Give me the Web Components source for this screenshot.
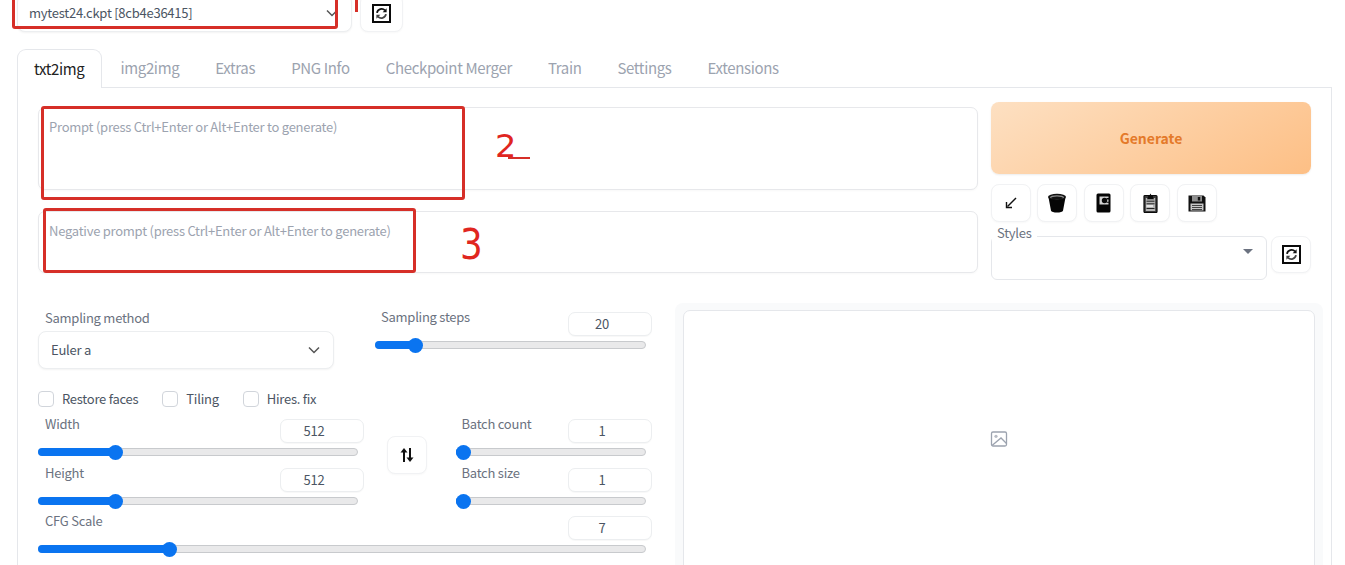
<!DOCTYPE html>
<html><head><meta charset="utf-8">
<style>
html,body{margin:0;padding:0;background:#fff;overflow:hidden;height:565px}
body{font-family:"Noto Sans CJK SC","Liberation Sans",sans-serif;font-size:13px;letter-spacing:-.25px;color:#4b5563}
</style></head><body>
<sd-app></sd-app>
<script>
const def=(name,css,html)=>{
  customElements.define(name,class extends HTMLElement{
    constructor(){super();this.attachShadow({mode:'open'});
      const f=typeof html==='function'?html(this):html;
      this.shadowRoot.innerHTML='<style>'+css+'</style>'+f;}
  });
};
const ICONS={
refresh:'<svg width="19" height="19" viewBox="0 0 19 19"><rect x="1" y="1" width="17" height="17" fill="#fff" stroke="#0a0a0a" stroke-width="2"/><path d="M5 8.800A4.700 4.700 0 0 1 13 6.400" fill="none" stroke="#111" stroke-width="1.800"/><path d="M14.600 4.300v4h-4z" fill="#111"/><path d="M14 10.200A4.700 4.700 0 0 1 6 12.600" fill="none" stroke="#444" stroke-width="1.800"/><path d="M4.400 14.700v-4h4z" fill="#444"/></svg>',
arrow:'<svg width="12" height="12" viewBox="0 0 12 12"><path d="M11 1 2.500 9.500" stroke="#111" stroke-width="1.400"/><path d="M1.500 5v5.500H7" fill="none" stroke="#111" stroke-width="1.400"/></svg>',
bin:'<svg width="20" height="20" viewBox="0 0 20 20"><path d="M1.500 4.500 4 17.500c.3 1.500 3 2 6 2s5.700-.5 6-2L18.500 4.500z" fill="#050505"/><ellipse cx="10" cy="4" rx="9" ry="3.200" fill="#111"/><ellipse cx="10" cy="4.200" rx="7" ry="2" fill="#8d8d8d"/><ellipse cx="10" cy="5" rx="6" ry="1.500" fill="#111"/></svg>',
card:'<svg width="15" height="20" viewBox="0 0 15 20"><rect x=".5" y=".5" width="14" height="19" rx="1.500" fill="#050505"/><rect x="3.500" y="3.500" width="9" height="8" fill="#d2d2d2"/><circle cx="8.500" cy="7.500" r="2.700" fill="#0a0a0a"/><path d="M10.500 5h2.500v1.500h-2.500zM10.500 8.800h2.500v1h-2.500z" fill="#050505"/></svg>',
clip:'<svg width="15" height="20" viewBox="0 0 15 20"><rect x="1" y="2.500" width="13" height="17" rx="1" fill="#3a3a3a" stroke="#0a0a0a" stroke-width="1.200"/><rect x="2.800" y="5" width="9.400" height="13" fill="#b4b4b4"/><path d="M4.500 5 5.500 2.500h1L7.500.6 8.500 2.500h1l1 2.500 .5 1.200H4z" fill="#0a0a0a"/><path d="M3.500 8.200h8M3.500 10.800h8M3.500 15.500h8" stroke="#222" stroke-width="1"/><path d="M3.500 13h6.500" stroke="#fff" stroke-width="1.300"/></svg>',
save:'<svg width="18" height="17" viewBox="0 0 18 17"><path d="M.5.5h15l2 2v14H.5z" fill="#111"/><rect x="4" y="1" width="10" height="5.500" fill="#8f8f8f"/><rect x="9.800" y="2" width="2.400" height="3.500" fill="#111"/><rect x="2.500" y="8.500" width="13" height="7" fill="#c8c8c8"/><path d="M4 10.500h10M4 12.500h10M4 14.500h10" stroke="#333" stroke-width=".9"/></svg>',
swap:'<svg width="14" height="16" viewBox="0 0 14 16"><path d="M4 15V3" stroke="#111" stroke-width="2"/><path d="M.5 5.500 4 1l3.500 4.500z" fill="#111"/><path d="M10 1v12" stroke="#111" stroke-width="2"/><path d="M6.500 10.500 10 15l3.500-4.500z" fill="#111"/></svg>'
};
def('sd-icon-btn',`:host{display:flex;align-items:center;justify-content:center;box-sizing:border-box;background:#fff;border:1px solid #f1f2f4;border-radius:8px;box-shadow:0 1px 2px rgba(0,0,0,.03);width:var(--w,40px);height:var(--h,38px);flex:none}
svg{display:block}`,el=>ICONS[el.getAttribute('icon')]);
def('sd-num',`:host{display:flex;align-items:center;justify-content:center;box-sizing:border-box;width:84px;height:24px;padding:0 16px 2px 0;border:1px solid #eceef0;border-radius:7px;background:#fff;color:#4b5563;line-height:1;box-shadow:0 1px 1px rgba(0,0,0,.03)}`,'<slot></slot>');
def('sd-slider',`:host{display:block;box-sizing:border-box;position:relative}
.head{display:flex;justify-content:space-between;align-items:flex-start;height:24px}
.lab{margin-left:var(--lm,7px);line-height:18px;margin-top:-4px;color:#6b7280;white-space:nowrap}
.track{position:relative;height:8px;border:1px solid #c8cacd;border-radius:5px;background:#e9e9ea;margin-top:5px;margin-right:6px;box-sizing:border-box}
.fill{position:absolute;left:-1px;top:-1px;height:8px;background:#0a74f0;border-radius:5px}
.thumb{position:absolute;top:-4.500px;width:15px;height:15px;border-radius:50%;background:#0a74f0;margin-left:-8.500px}`,
el=>{const p=el.getAttribute('pct');return `<div class="head"><div class="lab">${el.getAttribute('label')||''}</div><sd-num>${el.getAttribute('value')}</sd-num></div><div class="track"><div class="fill" style="width:${p}px"></div><div class="thumb" style="left:${p}px"></div></div>`});
def('sd-check',`:host{display:inline-flex;align-items:center;gap:8px;color:#4b5563;white-space:nowrap}
i{display:block;width:16px;height:16px;box-sizing:border-box;border:1px solid #d1d5db;border-radius:4px;background:#fff}
span{display:block;margin-top:-2px}`,'<i></i><span><slot></slot></span>');
def('sd-tabs',`:host{display:flex;align-items:stretch;height:39px;box-sizing:border-box;position:relative;z-index:1;letter-spacing:-.35px;font-size:15px}
span{display:flex;align-items:center;padding:0 18px;color:#9ca3af;white-space:nowrap;box-sizing:border-box;padding-bottom:2px}
span.on{color:#222;background:#fff;border:1px solid #e5e7eb;border-bottom:none;border-radius:9px 9px 0 0;height:39px;padding:0 17px 2px 16px}
`,`<span class="on">txt2img</span><span>img2img</span><span>Extras</span><span>PNG Info</span><span>Checkpoint Merger</span><span>Train</span><span>Settings</span><span>Extensions</span>`);
def('sd-text',`:host{display:block;box-sizing:border-box;border:1px solid #e7e8eb;border-radius:7px;background:#fff;padding:10px 10px;color:#9ca3af;line-height:18px;box-shadow:0 1px 2px rgba(0,0,0,.03)}`,'<slot></slot>');
def('sd-select',`:host{display:flex;align-items:center;justify-content:space-between;box-sizing:border-box;border:1px solid #eceef0;border-radius:8px;background:#fff;padding:0 13px 0 var(--pl,12px);color:#4b5563;box-shadow:0 1px 2px rgba(0,0,0,.05)}
svg{display:block}
span{display:block;margin-top:-2px}`,'<span><slot></slot></span><svg width="12" height="8" viewBox="0 0 12 8" fill="none" stroke="#555" stroke-width="1.500"><path d="M1 1.500 6 6.500 11 1.500"/></svg>');
def('sd-app',`:host{display:block;position:relative;height:565px;overflow:hidden;padding:0 13px 0 17px;box-sizing:border-box}
.top{display:flex;align-items:flex-end;gap:8px;height:32px;margin-bottom:17px}
.model{width:335px;height:38px;flex:none;--pl:11px}
.panel{border:1px solid #e5e7eb;margin-top:-1px;padding:14px 20px 0;height:490px;box-sizing:border-box;background:#fff}
.row1{display:flex;gap:13px}
.prompts{width:940px;padding-top:5px;display:flex;flex-direction:column;gap:21px}
.p1{height:83px}.p2{height:62px}
.side{width:320px}
.gen{height:72px;border-radius:8px;background:linear-gradient(150deg,#fde0c2,#fdbf85);display:flex;align-items:center;justify-content:center;color:#e47a2a;font-size:14px;font-weight:700;letter-spacing:0;box-shadow:0 1px 2px rgba(0,0,0,.08)}
.tools{display:flex;justify-content:space-between;width:225.600px;margin-top:10px}
.styles{display:flex;justify-content:space-between;margin-top:14px}
.sbox{width:276px;height:44px;box-sizing:border-box;border:1px solid #e5e7eb;border-radius:6px;position:relative;display:flex;justify-content:flex-end;padding:12px 13px 0 0}
.sbox b{position:absolute;left:0;top:-13px;padding:0 5px;background:#fff;font-weight:400;line-height:18px;color:#6b7280}
.tri{width:0;height:0;border-left:5px solid transparent;border-right:5px solid transparent;border-top:5px solid #6b7280}
.row2{display:flex;margin-top:23px;gap:23px;margin-right:-12px}
.left{width:614px;flex:none}
.sr{display:flex;gap:41px;height:81px}
.sm{width:296px;flex:none}
.lab{margin-left:7px;line-height:18px;color:#6b7280;height:19px}
.sm .lab{margin-top:6px;margin-bottom:3px}
.sm sd-select{height:38px}
.steps{flex:1;margin-top:9px;--lm:6px}
.checks{display:flex;align-items:center;height:16px;margin-top:7px}
.dims{display:flex;margin-top:12px}
.wh{width:326px;flex:none;display:flex;flex-direction:column;gap:12px}
.mid{width:92px;flex:none;padding-left:23px;padding-top:17px;box-sizing:border-box}
.bc{flex:1;display:flex;flex-direction:column;gap:12px;--lm:5.500px}
.cfg{margin-top:11px}
.gallery{flex:1;background:#f9fafb;border-radius:8px;padding:7px 8px;height:300px;box-sizing:border-box}
.frame{background:#fff;border:1px solid #e5e7eb;border-radius:7px;height:320px;display:flex;align-items:center;justify-content:center;padding-bottom:62px;box-sizing:border-box}
.red{position:absolute;border:3px solid #d62f28;border-radius:3px;box-sizing:border-box;pointer-events:none}
.hand{position:absolute;color:#e0261f;line-height:1;font-family:"DejaVu Sans",sans-serif;letter-spacing:0;pointer-events:none;transform-origin:0 0}
.tick{position:absolute;background:#d62f28}
`,`
<div class="top"><sd-select class="model">mytest24.ckpt [8cb4e36415]</sd-select><sd-icon-btn icon="refresh" style="--w:43px"></sd-icon-btn></div>
<sd-tabs></sd-tabs>
<div class="panel">
 <div class="row1">
  <div class="prompts"><sd-text class="p1">Prompt (press Ctrl+Enter or Alt+Enter to generate)</sd-text><sd-text class="p2">Negative prompt (press Ctrl+Enter or Alt+Enter to generate)</sd-text></div>
  <div class="side">
   <div class="gen">Generate</div>
   <div class="tools"><sd-icon-btn icon="arrow"></sd-icon-btn><sd-icon-btn icon="bin"></sd-icon-btn><sd-icon-btn icon="card"></sd-icon-btn><sd-icon-btn icon="clip"></sd-icon-btn><sd-icon-btn icon="save"></sd-icon-btn></div>
   <div class="styles"><div class="sbox"><b>Styles</b><div class="tri"></div></div><sd-icon-btn icon="refresh" style="--h:37px"></sd-icon-btn></div>
  </div>
 </div>
 <div class="row2">
  <div class="left">
   <div class="sr">
    <div class="sm"><div class="lab">Sampling method</div><sd-select>Euler a</sd-select></div>
    <sd-slider class="steps" label="Sampling steps" value="20" pct="40"></sd-slider>
   </div>
   <div class="checks"><sd-check>Restore faces</sd-check><sd-check style="margin-left:24px">Tiling</sd-check><sd-check style="margin-left:24px">Hires. fix</sd-check></div>
   <div class="dims">
    <div class="wh"><sd-slider label="Width" value="512" pct="77"></sd-slider><sd-slider label="Height" value="512" pct="77"></sd-slider></div>
    <div class="mid"><sd-icon-btn icon="swap"></sd-icon-btn></div>
    <div class="bc"><sd-slider label="Batch count" value="1" pct="7"></sd-slider><sd-slider label="Batch size" value="1" pct="7"></sd-slider></div>
   </div>
   <sd-slider class="cfg" label="CFG Scale" value="7" pct="131"></sd-slider>
  </div>
  <div class="gallery"><div class="frame"><svg width="18" height="18" viewBox="0 0 18 18" fill="none" stroke="#9ca3af" stroke-width="1.300"><rect x="1.500" y="2" width="15" height="14" rx="1.500"/><circle cx="6" cy="6.300" r="1.600" fill="#b8bcc4" stroke="none"/><path d="M2 15.500 11 8l5.500 5.500"/></svg></div></div>
 </div>
</div>
<div class="red" style="left:12px;top:-10px;width:326px;height:39px"></div>
<div class="red" style="left:41px;top:106px;width:424px;height:94px"></div>
<div class="red" style="left:43px;top:208px;width:373px;height:65px"></div>
<div class="tick" style="left:355px;top:0;width:3px;height:12px"></div>
<div class="hand" style="left:495px;top:130px;font-size:32px;transform:scaleX(1.050)">2</div>
<div class="tick" style="left:508px;top:157px;width:22px;height:2px"></div>
<div class="hand" style="left:460px;top:224px;font-size:42px;transform:scaleX(.85)">3</div>
`);
</script></body></html>
